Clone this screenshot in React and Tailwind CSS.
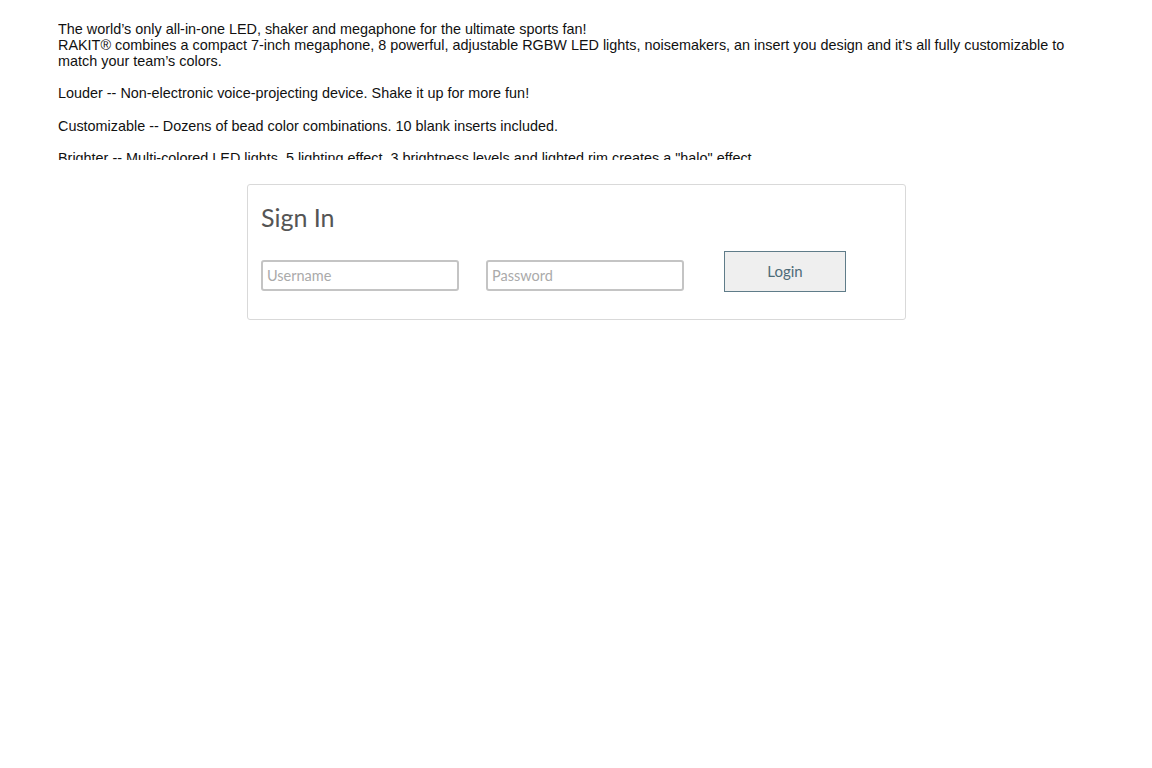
import React from "react";

export default function App() {
  return (
    <div className="w-[1152px] h-[768px] bg-white relative overflow-hidden">
      {/* product description, clipped */}
      <div className="ml-[58px] mt-[21px] w-[1020px] h-[139px] overflow-hidden text-[14.4px] leading-[16px] text-[#111] font-['Liberation_Sans',Arial,sans-serif]">
        <p className="mb-[16px]">
          The world’s only all-in-one LED, shaker and megaphone for the ultimate sports fan!
          <br />
          RAKIT® combines a compact 7-inch megaphone, 8 powerful, adjustable RGBW LED lights, noisemakers, an insert you design and it’s all fully customizable to match your team’s colors.
        </p>
        <p className="mb-[17px]">Louder -- Non-electronic voice-projecting device. Shake it up for more fun!</p>
        <p className="mb-[16px]">Customizable -- Dozens of bead color combinations. 10 blank inserts included.</p>
        <p>Brighter -- Multi-colored LED lights, 5 lighting effect, 3 brightness levels and lighted rim creates a "halo" effect</p>
      </div>

      {/* sign in card */}
      <div className="ml-[247px] mt-[24px] w-[659px] h-[136px] border border-[#d9d9d9] rounded-[3px] px-[13px] pt-[16px] font-['Lato','Noto_Sans',sans-serif]">
        <h2 className="text-[25px] leading-[32px] text-[#555] font-normal">Sign In</h2>
        <div className="flex items-center mt-[18px]">
          <input
            className="w-[198px] h-[31px] mt-[8px] border-2 border-[#c4c4c4] rounded-[3px] px-[4px] text-[14.5px] text-[#444] placeholder:text-[#aaa] outline-none"
            placeholder="Username"
          />
          <input
            type="password"
            className="ml-[27px] w-[198px] h-[31px] mt-[8px] border-2 border-[#c4c4c4] rounded-[3px] px-[4px] text-[14.5px] text-[#444] placeholder:text-[#aaa] outline-none"
            placeholder="Password"
          />
          <button className="ml-[40px] w-[122px] h-[41px] bg-[#efefef] border border-[#5f7c89] text-[15px] text-[#4d6b78]">
            Login
          </button>
        </div>
      </div>
    </div>
  );
}
